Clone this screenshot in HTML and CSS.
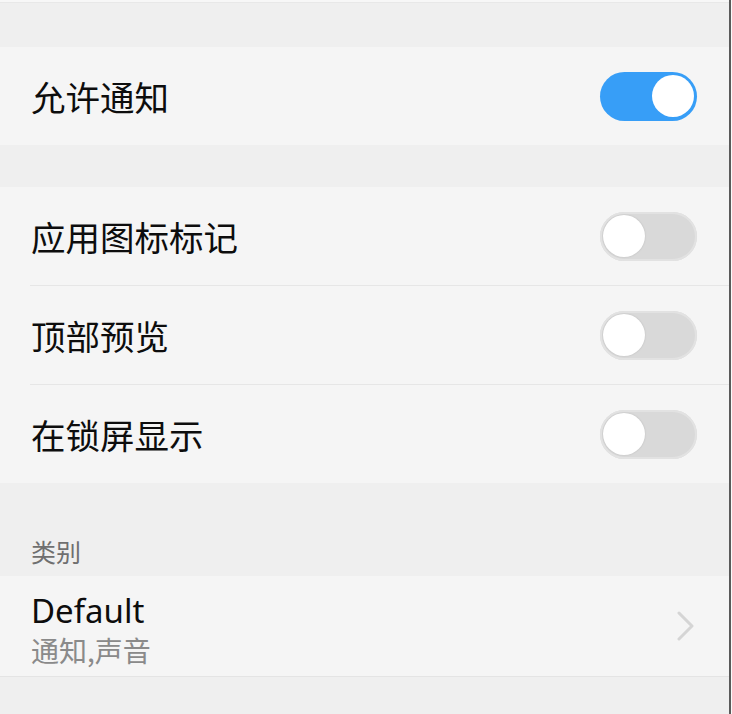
FILE: index.html
```html
<!DOCTYPE html>
<html lang="zh-CN">
<head>
    <meta charset="UTF-8">
    <meta name="viewport" content="width=device-width, initial-scale=1.0">
    <title>通知设置</title>
    <link rel="stylesheet" href="styles.css">
</head>
<body>
    <div class="page">
        <div class="top-strip"></div>
        <div class="gap gap-top"></div>

        <div class="group">
            <div class="row">
                <span class="label">允许通知</span>
                <span class="switch on"><span class="knob"></span></span>
            </div>
        </div>

        <div class="gap"></div>

        <div class="group">
            <div class="row">
                <span class="label">应用图标标记</span>
                <span class="switch"><span class="knob"></span></span>
            </div>
            <div class="row">
                <span class="label">顶部预览</span>
                <span class="switch"><span class="knob"></span></span>
            </div>
            <div class="row">
                <span class="label">在锁屏显示</span>
                <span class="switch"><span class="knob"></span></span>
            </div>
        </div>

        <div class="section-title">类别</div>

        <div class="group group-last">
            <div class="row row-link">
                <div class="text">
                    <div class="title">Default</div>
                    <div class="sub">通知,声音</div>
                </div>
                <svg class="chevron" width="18" height="30" viewBox="0 0 18 30">
                    <polyline points="2,2 15,15 2,28" fill="none" stroke="#d5d5d5" stroke-width="3" stroke-linecap="round" stroke-linejoin="round"/>
                </svg>
            </div>
        </div>
    </div>
</body>
</html>
```

FILE: styles.css
```css
html, body {
    margin: 0;
    padding: 0;
    background: #fafafa;
}
body {
    font-family: "Noto Sans", "Noto Sans CJK SC", sans-serif;
    color: #111;
}
.page {
    width: 729px;
    height: 714px;
    background: #efefef;
    border-right: 2px solid #5a5a5a;
    overflow: hidden;
}
.top-strip {
    height: 2px;
    background: #f7f7f7;
    border-bottom: 1px solid #e8e8e8;
}
.gap {
    height: 42px;
}
.gap-top {
    height: 44px;
}
.group {
    background: #f5f5f5;
    padding-left: 30px;
}
.row {
    height: 98px;
    display: flex;
    align-items: center;
    justify-content: space-between;
    padding: 0 32px 0 1px;
}
.row + .row {
    border-top: 1px solid #e6e6e6;
}
.label {
    font-family: "Noto Sans CJK SC", sans-serif;
    font-size: 34.5px;
    line-height: 1;
    color: #0d0d0d;
}
.switch {
    width: 91px;
    height: 43px;
    padding: 3px;
    border-radius: 25px;
    background: #d9d9d9;
    box-shadow: inset 0 0 0 2px #e2e2e2;
    display: flex;
    align-items: center;
}
.switch .knob {
    width: 42px;
    height: 42px;
    border-radius: 50%;
    background: #fff;
    box-shadow: 0 0 2px rgba(0, 0, 0, 0.15);
}
.switch.on {
    background: #379ef7;
    box-shadow: none;
    justify-content: flex-end;
}
.switch.on .knob {
    box-shadow: none;
}
.section-title {
    height: 93px;
    box-sizing: border-box;
    padding: 54px 0 0 31px;
    font-family: "Noto Sans CJK SC", sans-serif;
    font-size: 25px;
    line-height: 28px;
    color: #6f6f6f;
}
.group-last {
    border-bottom: 1px solid #e4e4e4;
}
.row-link {
    height: 100px;
    padding-right: 34px;
}
.text .title {
    font-size: 33px;
    line-height: 45px;
    color: #0d0d0d;
}
.text .sub {
    font-family: "Noto Sans CJK SC", sans-serif;
    font-size: 28px;
    line-height: 30px;
    margin-top: 2px;
    color: #8a8a8a;
}
.chevron {
    display: block;
}
```
